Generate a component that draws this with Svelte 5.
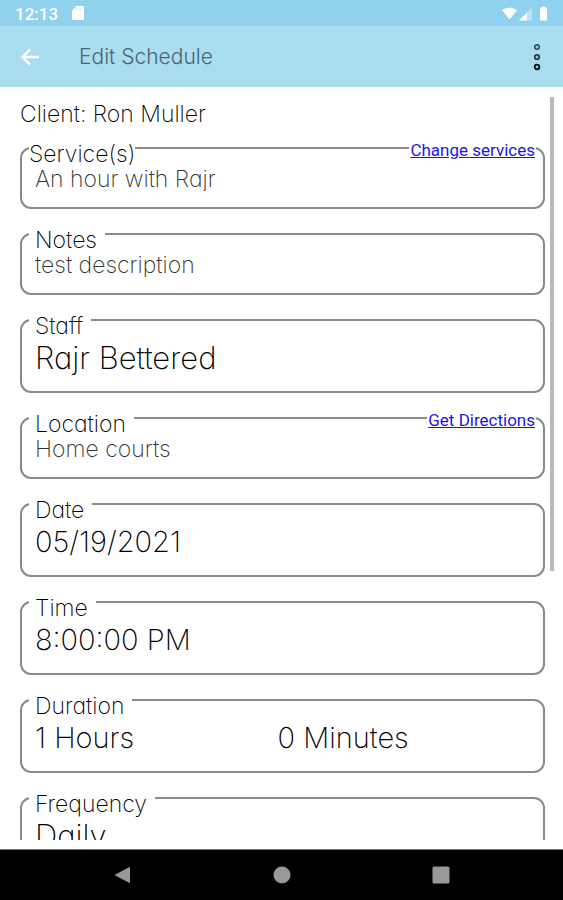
<script>
  const fields = [
    { id: 'service', label: 'Service(s)', flush: true, value: 'An hour with Rajr', muted: true, link: 'Change services' },
    { id: 'notes', label: 'Notes', value: 'test description', muted: true },
    { id: 'staff', label: 'Staff', value: 'Rajr Bettered' },
    { id: 'location', label: 'Location', value: 'Home courts', muted: true, link: 'Get Directions' },
    { id: 'date', label: 'Date', value: '05/19/2021', numeric: true },
    { id: 'time', label: 'Time', value: '8:00:00 PM', numeric: true },
    { id: 'duration', label: 'Duration', value: '1 Hours', second: '0 Minutes', numeric: true },
    { id: 'frequency', label: 'Frequency', value: 'Daily' }
  ];
</script>

<div class="screen">
  <div class="status">
    <span class="clock">12:13</span>
    <svg class="card" width="12" height="14" viewBox="0 0 12 14" aria-hidden="true">
      <path d="M4.5 0H10.5Q12 0 12 1.5V12.5Q12 14 10.5 14H1.5Q0 14 0 12.5V4.5Z" fill="#fff" />
      <path d="M4.5 2v2M6.8 2v2M9.1 2v2" stroke="#90d1ed" stroke-width="0.5" />
    </svg>
    <svg class="signals" width="46" height="15" viewBox="0 0 46 15" aria-hidden="true">
      <path d="M0 4Q7 -1 15 4L7.500 13.500Z" fill="#fff" />
      <path d="M17 14.500L30 1.500V14.500Z" fill="#fff" opacity="0.4" />
      <path d="M17 14.500L25 6.500V14.500Z" fill="#fff" />
      <path d="M40 0.500h3v1h1q1 0 1 1v11q0 1-1 1h-5q-1 0-1-1v-11q0-1 1-1h1z" fill="#fff" />
    </svg>
  </div>

  <header>
    <button class="icon" aria-label="Back">
      <svg width="20" height="18" viewBox="0 0 20 18"><path d="M19 9H2.500M10 1.500L2.500 9L10 16.500" fill="none" stroke="#fff" stroke-width="2.400" /></svg>
    </button>
    <h1>Edit Schedule</h1>
    <button class="icon" aria-label="More options">
      <svg width="8" height="28" viewBox="0 0 8 28" fill="#9fc4d2">
        <circle cx="4" cy="4" r="2.300" stroke="#344a53" stroke-width="1.500" />
        <circle cx="4" cy="14" r="2.300" stroke="#22343c" stroke-width="1.600" />
        <circle cx="4" cy="24" r="2.300" stroke="#081216" stroke-width="1.800" />
      </svg>
    </button>
  </header>

  <div class="body">
    <main>
      <p class="client">Client: Ron Muller</p>
      <form>
        {#each fields as f (f.id)}
          <div class="field" class:large={!f.muted} class:numeric={f.numeric}>
            <div class="head">
              <label for={f.id} class:flush={f.flush}>{f.label}</label>
              {#if f.link}<a href="#{f.id}">{f.link}</a>{/if}
            </div>
            <div class="values">
              <input id={f.id} type="text" value={f.value} readonly />
              {#if f.second}
                <input class="second" type="text" aria-label="Duration minutes" value={f.second} readonly />
              {/if}
            </div>
          </div>
        {/each}
      </form>
    </main>
    <div class="thumb"></div>
  </div>

  <nav>
    <button aria-label="Back"><svg width="18" height="18" viewBox="0 0 18 18"><path d="M0.500 9L16 0.800V17.200Z" /></svg></button>
    <button aria-label="Home"><svg width="18" height="18" viewBox="0 0 18 18"><circle cx="9" cy="9" r="8.500" /></svg></button>
    <button aria-label="Recent apps"><svg width="18" height="18" viewBox="0 0 18 18"><rect x="0.500" y="0.500" width="17" height="17" rx="1.500" /></svg></button>
  </nav>
</div>

<style>
  :global(body) {
    margin: 0;
    background: #fff;
  }
  .screen {
    display: flex;
    flex-direction: column;
    height: 100vh;
    font-family: Inter, Lato, sans-serif;
    font-weight: 200;
    font-feature-settings: 'cv11';
    color: #000;
  }
  button {
    border: 0;
    padding: 0;
    background: none;
    display: flex;
    align-items: center;
    justify-content: center;
  }
  .status {
    display: flex;
    align-items: center;
    flex: none;
    height: 26px;
    padding: 0 15px;
    background: #90d1ed;
  }
  .clock {
    font: 500 17px/26px Roboto, sans-serif;
    color: #fff;
    padding-top: 2px;
  }
  .card {
    margin-left: 14px;
  }
  .signals {
    margin-left: auto;
  }
  header {
    display: flex;
    align-items: center;
    flex: none;
    height: 61px;
    padding: 0 16px 0 20px;
    background: #abddf0;
  }
  .icon {
    min-width: 20px;
    height: 40px;
  }
  h1 {
    flex: 1;
    margin: 0 0 0 39px;
    font-size: 21px;
    line-height: 24px;
    font-weight: 300;
    color: #4a6571;
  }
  .body {
    position: relative;
    flex: 1;
    min-height: 0;
    display: flex;
    margin-bottom: 9px;
  }
  main {
    flex: 1;
    overflow-y: auto;
    scrollbar-width: none;
    padding: 0 18px 0 20px;
  }
  .thumb {
    position: absolute;
    right: 9px;
    top: 10px;
    width: 4px;
    height: 63%;
    background: #b9b9b9;
  }
  .client {
    margin: 13px 0 19px;
    font-size: 23px;
    line-height: 28px;
  }
  form {
    display: flex;
    flex-direction: column;
    gap: 24px;
  }
  .field {
    box-sizing: border-box;
    min-height: 62px;
    border: 2px solid #8a8a8a;
    border-radius: 11px;
    padding: 0 7px;
  }
  .head {
    display: flex;
    justify-content: space-between;
    align-items: flex-start;
    margin-top: -8px;
  }
  label {
    background: #fff;
    padding: 0 8px 0 6px;
    font-size: 23px;
    line-height: 26px;
  }
  .flush {
    padding: 0;
  }
  a {
    background: #fff;
    padding: 0 1px;
    font: 400 17px/18px Roboto, sans-serif;
    color: #1c14e6;
  }
  .values {
    display: flex;
    padding: 0 6px;
  }
  input {
    flex: 1;
    min-width: 0;
    height: 24px;
    border: 0;
    padding: 0;
    outline: 0;
    background: none;
    font: inherit;
    font-feature-settings: inherit;
    font-size: 23px;
    color: #333;
  }
  .large {
    min-height: 74px;
  }
  .large input {
    height: 36px;
    font-size: 31px;
    color: #000;
  }
  .numeric input {
    font-size: 29px;
  }
  .values .second {
    flex: 0 0 51%;
  }
  nav {
    display: flex;
    flex: none;
    height: 50px;
    padding: 0 43px;
    background: #000;
    border-top: 1px solid #777;
  }
  nav button {
    flex: 1;
  }
  nav svg {
    fill: #999;
  }
</style>
